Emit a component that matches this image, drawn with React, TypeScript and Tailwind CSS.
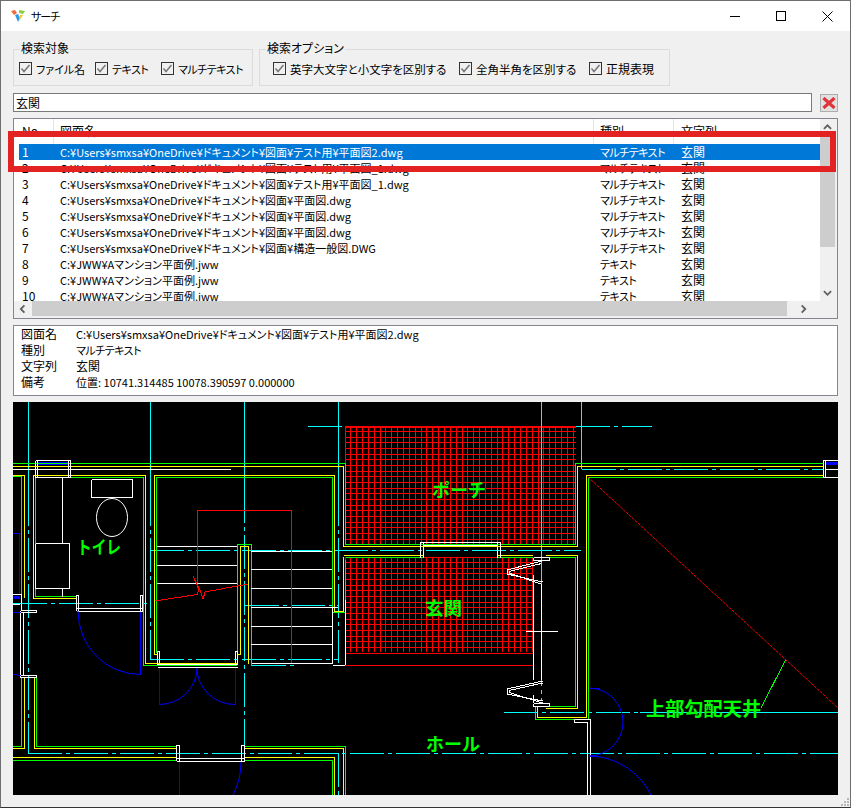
const filePath = 'C:¥Users¥smxsa¥OneDrive¥ドキュメント¥図面¥';
const rows = [
  { no: '1', path: `${filePath}テスト用¥平面図2.dwg`, kind: 'マルチテキスト' },
  { no: '2', path: `${filePath}テスト用¥平面図_1.dwg`, kind: 'マルチテキスト' },
  { no: '3', path: `${filePath}テスト用¥平面図_1.dwg`, kind: 'マルチテキスト' },
  { no: '4', path: `${filePath}平面図.dwg`, kind: 'マルチテキスト' },
  { no: '5', path: `${filePath}平面図.dwg`, kind: 'マルチテキスト' },
  { no: '6', path: `${filePath}平面図.dwg`, kind: 'マルチテキスト' },
  { no: '7', path: `${filePath}構造一般図.DWG`, kind: 'マルチテキスト' },
  { no: '8', path: 'C:¥JWW¥Aマンション平面例.jww', kind: 'テキスト' },
  { no: '9', path: 'C:¥JWW¥Aマンション平面例.jww', kind: 'テキスト' },
  { no: '10', path: 'C:¥JWW¥Aマンション平面例.jww', kind: 'テキスト' },
];

const details = [
  ['図面名', `${filePath}テスト用¥平面図2.dwg`, 'text-[11px]'],
  ['種別', 'マルチテキスト', 'text-[11px] tracking-[-0.5px]'],
  ['文字列', '玄関', ''],
  ['備考', '位置: 10741.314485 10078.390597 0.000000', 'text-[11px]'],
];

function Check({ label, className, text = '' }: { label: string; className: string; text?: string }) {
  return (
    <label className={`flex items-center gap-[4px] whitespace-nowrap shrink-0 ${className}`}>
      <svg width="13" height="13" viewBox="0 0 13 13" className="shrink-0">
        <rect x="0.5" y="0.5" width="12" height="12" fill="#f0f0f0" stroke="#333" />
        <path d="M2.5 6.5 L5 9.5 L10.5 3" fill="none" stroke="#777" strokeWidth="1.5" />
      </svg>
      <span className={text}>{label}</span>
    </label>
  );
}

function Group({ title, width, children }: { title: string; width: string; children: React.ReactNode }) {
  return (
    <div className={`relative h-[37px] border border-[#dcdcdc] flex items-center pt-[2px] ${width}`}>
      <span className="absolute -top-[9px] left-[6px] bg-[#f0f0f0] px-[1px] leading-[14px] whitespace-nowrap">{title}</span>
      {children}
    </div>
  );
}

function Arrow({ d, className }: { d: string; className: string }) {
  return (
    <span className={`flex items-center justify-center shrink-0 ${className}`}>
      <svg width="9" height="10" viewBox="0 0 10 10">
        <path d={d} fill="none" stroke="#606060" strokeWidth="2" />
      </svg>
    </span>
  );
}

// --- CAD drawing data, page coordinates ---
const CYAN = '#00ffff';
const GREEN = '#00ff00';
const YELLOW = '#ffff00';
const WHITE = '#ffffff';
const RED = '#ff0000';
const BLUE = '#0000ff';
const DASH = '34 4 4 4';

const solid: [string, string][] = [
  // cyan runs that are unbroken
  [CYAN, '28.5,402 28.5,492'],
  [CYAN, '150.5,402 150.5,492'],
  [CYAN, '244.5,402 244.5,489'],
  [CYAN, '338.5,402 338.5,492'],
  [CYAN, '541.5,402 541.5,560'],
  [CYAN, '581.5,402 581.5,469'],
  [CYAN, '640,712.5 838,712.5'],
  // outer wall top
  [GREEN, '13,463.5 345.5,463.5 345.5,544.5 575.5,544.5 575.5,463.5 823,463.5'],
  [YELLOW, '13,466.5 343.5,466.5 343.5,546.5 577.5,546.5 577.5,466.5 823,466.5'],
  [WHITE, '13,469.5 231,469.5'],
  // left room
  [YELLOW, '13,475.5 24.5,475.5 24.5,598'],
  [GREEN, '13,476.5 21.5,476.5 21.5,600'],
  // toilet
  [YELLOW, '145.5,475.5 33.5,475.5 33.5,598.5 76,598.5'],
  [GREEN, '143.5,477.5 35.5,477.5 35.5,596.5 76,596.5'],
  [YELLOW, '145.5,475.5 145.5,663.5 237,663.5'],
  [GREEN, '143.5,477.5 143.5,665.5 237,665.5'],
  // stairs enclosure
  [YELLOW, '237.5,654.5 240.5,654.5 240.5,546.5 248.5,546.5 248.5,663.5'],
  [GREEN, '237.5,663 237.5,544.5 251.5,544.5 251.5,665.5'],
  [YELLOW, '157,654.5 154.5,654.5 154.5,475.5 334.5,475.5 334.5,611.5 343.5,611.5 343.5,557'],
  [GREEN, '156.5,653 156.5,477.5 332.5,477.5 332.5,612.5 345.5,612.5 345.5,559.5'],
  [YELLOW, '343.5,555.5 423,555.5'],
  [GREEN, '345.5,557.5 423,557.5'],
  [YELLOW, '498,555.5 533,555.5'],
  [GREEN, '498,557.5 533,557.5'],
  // closet
  [YELLOW, '545.5,555.5 577.5,555.5 577.5,708.5 545.5,708.5'],
  [GREEN, '548.5,557.5 575.5,557.5 575.5,706.5 548.5,706.5'],
  // big room
  [YELLOW, '823,475.5 586.5,475.5 586.5,717.5 537.5,717.5 537.5,707'],
  [GREEN, '823,477.5 588.5,477.5 588.5,719.5 535.5,719.5 535.5,706'],
  // lower left room
  [YELLOW, '34.5,678 34.5,748.5 176,748.5'],
  [GREEN, '36.5,678 36.5,746.5 176,746.5'],
  [YELLOW, '24.5,678 24.5,748.5 13,748.5'],
  [GREEN, '21.5,678 21.5,746.5 13,746.5'],
  [YELLOW, '13,757.5 176,757.5'],
  [GREEN, '13,760.5 176,760.5'],
  [GREEN, '245,746.5 345.5,746.5 345.5,795'],
  [YELLOW, '245,748.5 343.5,748.5 343.5,795'],
  [YELLOW, '245,757.5 334.5,757.5 334.5,795'],
  [GREEN, '245,760.5 332.5,760.5 332.5,795'],
  // white lines, stairs
  [WHITE, '157,546.5 237,546.5'],
  [WHITE, '157,565.5 237,565.5'],
  [WHITE, '157,583.5 237,583.5'],
  [WHITE, '251,551.5 332,551.5'],
  [WHITE, '251,569.5 332,569.5'],
  [WHITE, '251,588.5 332,588.5'],
  [WHITE, '251,607.5 338,607.5'],
  [WHITE, '251,626.5 332,626.5'],
  [WHITE, '251,644.5 332,644.5'],
  [WHITE, '252,663.5 332.5,663.5 332.5,607'],
  [WHITE, '332.5,665.5 345.5,665.5 345.5,600'],
  // toilet fixtures
  [WHITE, '62.5,477 62.5,543'],
  [WHITE, '62.5,588 62.5,597'],
  [WHITE, '35.5,543.5 69.5,543.5 69.5,588.5 35.5,588.5 35.5,543.5'],
  [WHITE, '91.5,479.5 132.5,479.5 132.5,497.5 91.5,497.5 91.5,479.5'],
  // windows
  [WHITE, '35.5,460.5 70.5,460.5 70.5,477.5 35.5,477.5 35.5,460.5'],
  [WHITE, '37.5,460.5 37.5,477.5'],
  [WHITE, '68.5,460.5 68.5,477.5'],
  [WHITE, '37.5,469.5 68.5,469.5'],
  [WHITE, '838,460.5 823.5,460.5 823.5,477.5 838,477.5'],
  [WHITE, '825.5,460.5 825.5,477.5'],
  [WHITE, '825.5,469.5 838,469.5'],
  // door frames
  [WHITE, '76.5,611 76.5,595.5 78.5,595.5 78.5,611'],
  [WHITE, '140.5,611 140.5,595.5 142.5,595.5 142.5,611'],
  [WHITE, '76.5,608.5 142.5,608.5'],
  [WHITE, '76.5,611.5 142.5,611.5'],
  [WHITE, '20.5,611 20.5,676'],
  [WHITE, '23.5,612 23.5,676'],
  [WHITE, '13,594.5 21.5,594.5 21.5,610'],
  [WHITE, '13,604.5 20,604.5'],
  [WHITE, '20.5,610.5 36.5,610.5 36.5,612.5 20.5,612.5 20.5,610.5'],
  [WHITE, '20.5,675.5 36.5,675.5 36.5,677.5 20.5,677.5 20.5,675.5'],
  [WHITE, '157.5,665 157.5,651.5 159.5,651.5 159.5,665'],
  [WHITE, '235.5,665 235.5,651.5 237.5,651.5 237.5,665'],
  [WHITE, '157.5,664.5 237.5,664.5'],
  [WHITE, '157.5,667.5 237.5,667.5'],
  [WHITE, '176.5,761 176.5,745.5 179.5,745.5 179.5,761'],
  [WHITE, '241.5,761 241.5,745.5 244.5,745.5 244.5,761'],
  [WHITE, '176.5,758.5 244.5,758.5'],
  [WHITE, '176.5,761.5 244.5,761.5'],
  [WHITE, '420.5,558 420.5,542.5 423.5,542.5 423.5,558'],
  [WHITE, '497.5,558 497.5,542.5 500.5,542.5 500.5,558'],
  [WHITE, '420.5,542.5 500.5,542.5'],
  [WHITE, '423.5,545.5 497.5,545.5'],
  // entrance doors, right side
  [WHITE, '533.5,557.5 549.5,557.5 549.5,560.5 533.5,560.5 533.5,557.5'],
  [WHITE, '541.5,561 507,570 507,574 542.5,582'],
  [WHITE, '541.5,563.5 509,571.5 509,573 542.5,584.5'],
  [WHITE, '533.5,575 533.5,680'],
  [WHITE, '541.5,585 541.5,680'],
  [WHITE, '526,631.5 558,631.5'],
  [WHITE, '542.5,681 507,689 507,694 542.5,701'],
  [WHITE, '542.5,683 509,690.5 509,692.5 542.5,703'],
  [WHITE, '533.5,703.5 549.5,703.5 549.5,706.5 533.5,706.5 533.5,703.5'],
  [WHITE, '533.5,695 533.5,703'],
  // lower right wall
  [WHITE, '574,719.5 590.5,719.5 590.5,795'],
  [WHITE, '574,719.5 574,722.5 587.5,722.5 587.5,795'],
  // red
  [RED, '197.5,583 197.5,510.5 291.5,510.5 291.5,663'],
  [RED, '155,601 197,594.5 199,590 193,576 200,590 203,599 205,592 248,584'],
  [RED, '345,665.5 533,665.5'],
  [GREEN, '786,659 761,708'],
  // blue
  [BLUE, '19.5,533 19.5,594'],
  [BLUE, '13,533.5 20,533.5'],
  [BLUE, '13,612.5 21,612.5'],
  [BLUE, '13,674.5 21,675.5'],
  [BLUE, '159.5,668 159.5,704.5'],
  [BLUE, '235.5,668 235.5,704.5'],
  [BLUE, '140.5,612 140.5,674.5'],
  [BLUE, '179.5,762 179.5,795'],
  [BLUE, '590,688.5 600,688.5'],
  [BLUE, '590,756.5 600,756.5'],
];

const dashed: string[] = [
  '28.5,492 28.5,753',
  '150.5,492 150.5,660',
  '244.5,489 244.5,753',
  '338.5,492 338.5,663',
  '541.5,560 541.5,700',
  '581.5,469.5 823,469.5',
  '150,550.5 581,550.5',
  '245,605.5 338,605.5',
  '150,659.5 338,659.5',
  '252,665.5 296,665.5',
  '28,753.5 838,753.5',
  '338.5,753 338.5,795',
  '308,426.5 345,426.5',
  '576,426.5 652,426.5',
  '504,712.5 640,712.5',
  '13,603.5 150,603.5',
];

const steps = (from: number, to: number, step: number) =>
  Array.from({ length: Math.round((to - from) / step) + 1 }, (_, i) => Math.floor(from + i * step) + 0.5);

function Hatch({ x1, y1, x2, y2 }: { x1: number; y1: number; x2: number; y2: number }) {
  return (
    <g stroke={RED} strokeWidth="1">
      {steps(x1, x2, 5.85).map(x => (
        <line key={`v${x}`} x1={x} y1={y1} x2={x} y2={y2} />
      ))}
      {steps(y1, y2, 5.65).map(y => (
        <line key={`h${y}`} x1={x1} y1={y} x2={x2} y2={y} />
      ))}
    </g>
  );
}

function CadDrawing() {
  return (
    <svg viewBox="13 402 825 393" width="825" height="393" className="block bg-black">
      <g fill="none" shapeRendering="crispEdges">
        <Hatch x1={345} y1={426} x2={576} y2={544} />
        <Hatch x1={345} y1={557} x2={533} y2={652} />
        <line x1="345" y1="426.5" x2="576" y2="426.5" stroke={RED} strokeWidth="2" />
        <rect x="37" y="462" width="32" height="3" fill={BLUE} />
        <rect x="13" y="596" width="7" height="3" fill={BLUE} />
        <rect x="825" y="462" width="13" height="3" fill={BLUE} />
        {dashed.map(pts => (
          <polyline key={pts} points={pts} stroke={CYAN} strokeDasharray={DASH} />
        ))}
        {solid.map(([color, pts]) => (
          <polyline key={color + pts} points={pts} stroke={color} />
        ))}
      </g>
      <g fill="none">
        <ellipse cx="112" cy="517.5" rx="15.5" ry="19" stroke={WHITE} />
        <path d="M159 704.5 A38 36.5 0 0 0 197 668 A38 36.5 0 0 0 235.5 704.5" stroke={BLUE} />
        <path d="M78 611 A62.5 63.5 0 0 0 140.5 674.5" stroke={BLUE} />
        <path d="M241 762 Q241 780 233 795" stroke={BLUE} />
        <path d="M589 688 A34 34 0 0 1 589 756 A70 70 0 0 1 651 795" stroke={BLUE} />
        <line x1="588" y1="477" x2="838" y2="708" stroke={RED} strokeDasharray="3 1" />
      </g>
      <g fill={GREEN} className="font-bold [font-feature-settings:normal]">
        <text x="77" y="554" fontSize="18" textLength="44" lengthAdjust="spacingAndGlyphs">トイレ</text>
        <text x="432" y="497" fontSize="18">ポーチ</text>
        <text x="425" y="615" fontSize="18.5">玄関</text>
        <text x="426" y="751" fontSize="18">ホール</text>
        <text x="646" y="716" fontSize="19.2">上部勾配天井</text>
      </g>
    </svg>
  );
}

export default function App() {
  return (
    <div className="relative w-[851px] h-[808px] overflow-hidden bg-[#f0f0f0] border border-[#6e6e6e] border-b-[#333] text-[12px] leading-[16px] text-black font-['Noto_Sans_CJK_JP',sans-serif] [font-feature-settings:'palt']">
      {/* title bar */}
      <div className="h-[30px] bg-white flex items-center pl-[10px]">
        <svg width="14" height="12" viewBox="0 0 14 12" className="shrink-0">
          <path d="M0 1 L4 0 L6 3 L3 5 Z" fill="#ef6b3a" />
          <path d="M8 0 L14 1 L12 4 L8 3 Z" fill="#8ccf3f" />
          <path d="M4 5 L7 4 L9 8 L7 12 Z" fill="#2f9be8" />
          <path d="M9 5 L12 5 L8 11 Z" fill="#f5c62e" />
        </svg>
        <span className="ml-[6px] text-[11px] tracking-[-1px]">サーチ</span>
        <div className="ml-auto flex items-center">
          <span className="w-[46px] h-[30px] flex items-center justify-center">
            <span className="w-[10px] h-px bg-black" />
          </span>
          <span className="w-[46px] h-[30px] flex items-center justify-center">
            <span className="w-[10px] h-[10px] border border-black" />
          </span>
          <span className="w-[46px] h-[30px] flex items-center justify-center">
            <svg width="11" height="11" viewBox="0 0 11 11">
              <path d="M0.5 0.5 L10.5 10.5 M10.5 0.5 L0.5 10.5" stroke="#000" />
            </svg>
          </span>
        </div>
      </div>

      <div className="pl-[12px] pr-[12px]">
        {/* search options */}
        <div className="flex gap-[6px] mt-[18px]">
          <Group title="検索対象" width="w-[240px]">
            <Check label="ファイル名" className="ml-[5px] w-[76px]" text="text-[11px]" />
            <Check label="テキスト" className="w-[66px]" text="text-[11px] tracking-[-0.5px]" />
            <Check label="マルチテキスト" className="" text="text-[11px] tracking-[-0.5px]" />
          </Group>
          <Group title="検索オプション" width="w-[411px]">
            <Check label="英字大文字と小文字を区別する" className="ml-[13px] w-[186px]" text="text-[11.5px]" />
            <Check label="全角半角を区別する" className="w-[130px]" text="text-[11.5px]" />
            <Check label="正規表現" className="" />
          </Group>
        </div>

        {/* search box */}
        <div className="flex items-center mt-[7px] h-[19px]">
          <div className="w-[799px] h-[19px] border border-[#7a7a7a] bg-white pl-[2px] leading-[17px]">玄関</div>
          <div className="ml-[8px] w-[18px] h-[18px] border border-[#adadad] bg-[#e1e1e1] flex items-center justify-center">
            <svg width="14" height="12" viewBox="0 0 14 12">
              <path d="M1.5 1 L12.5 11 M12.5 1 L1.5 11" stroke="#e0333a" strokeWidth="3.2" />
            </svg>
          </div>
        </div>

        {/* result list */}
        <div className="relative mt-[6px] w-[825px] h-[201px] border border-[#828790] bg-[#f0f0f0] flex">
          <div className="w-[806px] shrink-0 flex flex-col">
            <div className="h-[25px] shrink-0 flex bg-white">
              <span className="w-[40px] pl-[8px] pt-[4px] border-r border-[#e5e5e5]">No</span>
              <span className="w-[540px] pl-[6px] pt-[4px] border-r border-[#e5e5e5]">図面名</span>
              <span className="w-[80px] pl-[6px] pt-[4px] border-r border-[#e5e5e5]">種別</span>
              <span className="flex-1 pl-[7px] pt-[4px]">文字列</span>
            </div>
            <div className="h-[157px] overflow-hidden pl-[5px] bg-white">
              {rows.map((row, i) => (
                <div key={row.no} className={`h-[16px] flex whitespace-nowrap ${i === 0 ? 'bg-[#0078d7] text-white' : ''}`}>
                  <span className="w-[35px] pl-[3px]">{row.no}</span>
                  <span className="w-[541px] pl-[6px] text-[11px]">{row.path}</span>
                  <span className="w-[86px] pl-[5px] text-[11px] tracking-[-0.5px]">{row.kind}</span>
                  <span>玄関</span>
                </div>
              ))}
            </div>
            <div className="h-[15px] shrink-0 flex items-center ml-[1px]">
              <Arrow d="M6 1 L2 5 L6 9" className="w-[17px]" />
              <div className="w-[755px] h-full bg-[#cdcdcd]" />
              <Arrow d="M3 1 L7 5 L3 9" className="w-[33px]" />
            </div>
          </div>
          <div className="w-[15px] h-[182px] flex flex-col justify-between">
            <div className="flex flex-col w-full">
              <Arrow d="M1 6 L5 2 L9 6" className="h-[17px] w-full" />
              <div className="h-[111px] bg-[#cdcdcd]" />
            </div>
            <Arrow d="M1 3 L5 7 L9 3" className="h-[17px] w-full" />
          </div>
          {/* red annotation frame */}
          <div className="absolute left-[-6px] top-[12px] w-[828px] h-[41px] border-[6px] border-[#e32222]" />
        </div>

        {/* detail */}
        <div className="mt-[6px] w-[825px] h-[71px] border border-[#828790] bg-white pl-[7px]">
          {details.map(([name, value, size]) => (
            <div key={name} className="h-[16px] flex whitespace-nowrap">
              <span className="w-[55px]">{name}</span>
              <span className={size}>{value}</span>
            </div>
          ))}
        </div>

        <div className="mt-[6px]">
          <CadDrawing />
        </div>
      </div>

      {/* resize grip */}
      <div className="absolute right-[1px] bottom-[1px] grid grid-cols-3 gap-px w-[8px] h-[8px]">
        <span /><span /><span className="bg-[#b8b8b8]" />
        <span /><span className="bg-[#b8b8b8]" /><span className="bg-[#b8b8b8]" />
        <span className="bg-[#b8b8b8]" /><span className="bg-[#b8b8b8]" /><span className="bg-[#b8b8b8]" />
      </div>
    </div>
  );
}
